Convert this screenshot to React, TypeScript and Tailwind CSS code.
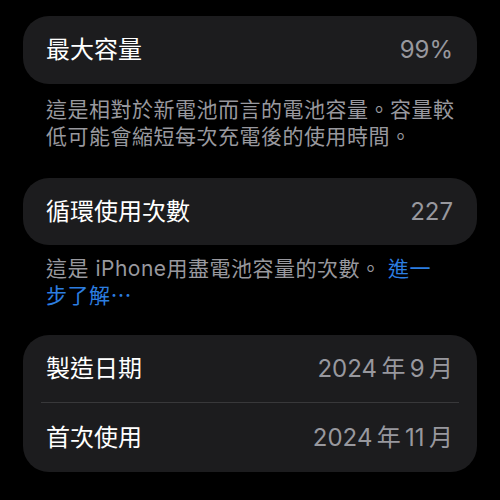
export default function App() {
  return (
    <div
      className="w-[500px] h-[500px] bg-black overflow-hidden px-[23px] pt-[16px] text-white"
      style={{ fontFamily: 'Inter, "Noto Sans CJK TC", sans-serif' }}
    >
      {/* 最大容量 */}
      <div className="h-[68px] rounded-[26px] bg-[#1c1c1e] flex items-center justify-between pl-[23px] pr-[24px]">
        <span className="text-[24px]">最大容量</span>
        <span className="text-[24px] text-[#98989e]">99%</span>
      </div>
      <p className="px-[23px] mt-[12px] text-[21px] tracking-[0.5px] leading-[27px] text-[#98989e] whitespace-nowrap">
        這是相對於新電池而言的電池容量。容量較
        <br />
        低可能會縮短每次充電後的使用時間。
      </p>

      {/* 循環使用次數 */}
      <div className="mt-[28px] h-[67px] rounded-[26px] bg-[#1c1c1e] flex items-center justify-between pl-[23px] pr-[24px]">
        <span className="text-[24px]">循環使用次數</span>
        <span className="text-[24px] text-[#98989e]">227</span>
      </div>
      <p className="px-[23px] mt-[10px] text-[21px] tracking-[0.5px] leading-[27px] text-[#98989e] whitespace-nowrap">
        這是 iPhone用盡電池容量的次數。 <span className="text-[#2c7ee0]">進一</span>
        <br />
        <span className="text-[#2c7ee0]">步了解⋯</span>
      </p>

      {/* 日期 */}
      <div className="mt-[26px] rounded-[26px] bg-[#1c1c1e] px-[18px]">
        <div className="h-[68px] flex items-center justify-between pl-[5px] pr-[6px] border-b border-[#38383a]">
          <span className="text-[24px]">製造日期</span>
          <span className="text-[24px] text-[#98989e]">2024{"\u2009"}年{"\u2009"}9{"\u2009"}月</span>
        </div>
        <div className="h-[69px] flex items-center justify-between pl-[5px] pr-[6px]">
          <span className="text-[24px]">首次使用</span>
          <span className="text-[24px] text-[#98989e]">2024{"\u2009"}年{"\u2009"}11{"\u2009"}月</span>
        </div>
      </div>
    </div>
  );
}
